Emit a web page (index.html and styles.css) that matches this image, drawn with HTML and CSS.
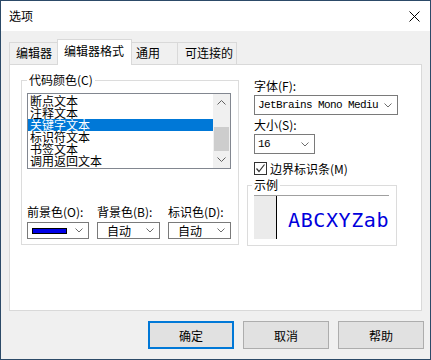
FILE: index.html
```
<!DOCTYPE html>
<html lang="zh">
<head>
    <meta charset="utf-8">
    <title>选项</title>
    <link rel="stylesheet" href="styles.css">
</head>
<body>

<div class="window">
    <div class="titlebar">
        <span class="title">选项</span>
        <svg class="close" width="11" height="11" viewBox="0 0 11 11">
            <path d="M0.5 0.5L10.5 10.5M10.5 0.5L0.5 10.5" stroke="#000" stroke-width="1" fill="none"/>
        </svg>
    </div>

    <div class="content">
        <div class="tabs">
            <div class="tab tab-editor">编辑器</div>
            <div class="tab tab-format active">编辑器格式</div>
            <div class="tab tab-general">通用</div>
            <div class="tab tab-connect">可连接的</div>
        </div>

        <div class="panel">
            <div class="group colors">
                <div class="group-title">代码颜色(C)</div>
                <div class="listbox">
                    <ul class="items">
                        <li>断点文本</li>
                        <li>注释文本</li>
                        <li class="selected">关键字文本</li>
                        <li>标识符文本</li>
                        <li>书签文本</li>
                        <li>调用返回文本</li>
                    </ul>
                    <div class="scrollbar">
                        <div class="sb-btn">
                            <svg width="9" height="5" viewBox="0 0 9 5"><path d="M0.5 4.5L4.5 0.5L8.5 4.5" stroke="#606060" fill="none"/></svg>
                        </div>
                        <div class="sb-track"><div class="sb-thumb"></div></div>
                        <div class="sb-btn">
                            <svg width="9" height="5" viewBox="0 0 9 5"><path d="M0.5 0.5L4.5 4.5L8.5 0.5" stroke="#606060" fill="none"/></svg>
                        </div>
                    </div>
                </div>

                <div class="pickers">
                    <div class="picker">
                        <div class="picker-label">前景色(O):</div>
                        <div class="combo color-combo">
                            <span class="swatch"></span>
                            <svg class="chev" width="8" height="5" viewBox="0 0 8 5"><path d="M0.5 0.5L4 4L7.5 0.5" stroke="#6d6d6d" fill="none"/></svg>
                        </div>
                    </div>
                    <div class="picker">
                        <div class="picker-label">背景色(B):</div>
                        <div class="combo color-combo">
                            <span>自动</span>
                            <svg class="chev" width="8" height="5" viewBox="0 0 8 5"><path d="M0.5 0.5L4 4L7.5 0.5" stroke="#6d6d6d" fill="none"/></svg>
                        </div>
                    </div>
                    <div class="picker">
                        <div class="picker-label">标识色(D):</div>
                        <div class="combo color-combo">
                            <span>自动</span>
                            <svg class="chev" width="8" height="5" viewBox="0 0 8 5"><path d="M0.5 0.5L4 4L7.5 0.5" stroke="#6d6d6d" fill="none"/></svg>
                        </div>
                    </div>
                </div>
            </div>

            <div class="side">
                <div class="label">字体(F):</div>
                <div class="combo font-combo">
                    <span class="mono">JetBrains Mono Mediu</span>
                    <svg class="chev" width="8" height="5" viewBox="0 0 8 5"><path d="M0.5 0.5L4 4L7.5 0.5" stroke="#6d6d6d" fill="none"/></svg>
                </div>
                <div class="label size-label">大小(S):</div>
                <div class="combo size-combo">
                    <span class="mono">16</span>
                    <svg class="chev" width="8" height="5" viewBox="0 0 8 5"><path d="M0.5 0.5L4 4L7.5 0.5" stroke="#6d6d6d" fill="none"/></svg>
                </div>
                <div class="check">
                    <span class="box">
                        <svg width="11" height="11" viewBox="0 0 11 11"><path d="M1.5 5.5L4 8.5L9.5 1.5" stroke="#333" stroke-width="1.2" fill="none"/></svg>
                    </span>
                    边界标识条(M)
                </div>
                <div class="group sample">
                    <div class="group-title">示例</div>
                    <div class="preview">
                        <div class="gutter"></div>
                        <div class="sample-text">ABCXYZab</div>
                    </div>
                </div>
            </div>
        </div>

        <div class="buttons">
            <button class="btn default">确定</button>
            <button class="btn">取消</button>
            <button class="btn">帮助</button>
        </div>
    </div>
</div>

</body>
</html>
```

FILE: styles.css
```
* {
    box-sizing: border-box;
}
body {
    margin: 0;
    font-family: "Noto Sans CJK SC", sans-serif;
    font-size: 12px;
    color: #000;
}
.window {
    width: 431px;
    height: 360px;
    border: 1px solid #2c4a68;
    background: #f0f0f0;
    display: flex;
    flex-direction: column;
}
.titlebar {
    height: 30px;
    flex: none;
    background: #fff;
    display: flex;
    align-items: center;
    justify-content: space-between;
    padding: 0 10px 0 8px;
}
.title {
    line-height: 14px;
}
.content {
    flex: 1;
    display: flex;
    flex-direction: column;
    padding: 8px 8px 10px;
}

/* tabs */
.tabs {
    display: flex;
    align-items: flex-end;
    height: 25px;
    flex: none;
}
.tab {
    height: 22px;
    margin-left: -1px;
    border: 1px solid #d9d9d9;
    border-bottom: none;
    background: #f0f0f0;
    line-height: 20px;
    white-space: nowrap;
}
.tab.active {
    height: 26px;
    margin-bottom: -1px;
    background: #fff;
    line-height: 22px;
    position: relative;
    z-index: 1;
}
.tab-editor {
    margin-left: 0;
    width: 49px;
    padding-left: 6px;
}
.tab-format {
    width: 75px;
    padding-left: 6px;
}
.tab-general {
    width: 47px;
    padding-left: 4px;
}
.tab-connect {
    width: 60px;
    padding-left: 7px;
}
.panel {
    height: 247px;
    flex: none;
    border: 1px solid #d9d9d9;
    background: #fff;
    display: flex;
    align-items: flex-start;
    padding: 15px 0 0 11px;
}

/* group boxes */
.group {
    border: 1px solid #dcdcdc;
}
.group-title {
    width: fit-content;
    margin-top: -8px;
    padding: 0 2px;
    line-height: 14px;
    background: #fff;
}
.colors {
    width: 218px;
    height: 165px;
    display: flex;
    flex-direction: column;
    padding-bottom: 5px;
}
.colors .group-title {
    margin-left: 5px;
}
.listbox {
    width: 204px;
    height: 76px;
    margin: 6px 0 0 5px;
    border: 1px solid #828790;
    display: flex;
}
.items {
    flex: 1;
    list-style: none;
    margin: 0;
    padding: 1px 0 0;
    overflow: hidden;
}
.items li {
    height: 12px;
    line-height: 12px;
    padding-left: 2px;
    white-space: nowrap;
}
.items li.selected {
    background: #0078d7;
    color: #fff;
}
.scrollbar {
    width: 17px;
    flex: none;
    background: #f0f0f0;
    display: flex;
    flex-direction: column;
}
.sb-btn {
    height: 17px;
    display: flex;
    align-items: center;
    justify-content: center;
}
.sb-track {
    flex: 1;
    padding: 16px 1px 0;
}
.sb-thumb {
    height: 24px;
    background: #cdcdcd;
}
.pickers {
    margin-top: auto;
    padding-left: 5px;
    display: grid;
    grid-template-columns: 62px 63px 63px;
    column-gap: 8px;
}
.picker-label {
    line-height: 14px;
    white-space: nowrap;
}

/* combos */
.combo {
    border: 1px solid #7a7a7a;
    background: #fff;
    display: flex;
    align-items: center;
    justify-content: space-between;
}
.color-combo {
    height: 17px;
    margin-top: 3px;
    padding: 0 5px 0 9px;
    line-height: 14px;
}
.color-combo .swatch {
    width: 35px;
    height: 6px;
    margin-left: -5px;
    background: #0000e6;
    border: 1px solid #000;
}
.mono {
    font-family: "Liberation Mono", monospace;
    font-size: 11px;
    letter-spacing: -0.6px;
}
.side {
    width: 144px;
    margin-left: 15px;
    display: flex;
    flex-direction: column;
}
.label {
    line-height: 12px;
}
.size-label {
    margin-top: 4px;
}
.font-combo,
.size-combo {
    height: 20px;
    margin-top: 3px;
    padding: 0 5px 0 3px;
}
.size-combo {
    width: 61px;
}
.check {
    height: 13px;
    margin-top: 8px;
    display: flex;
    align-items: center;
    gap: 3px;
    line-height: 13px;
    white-space: nowrap;
}
.box {
    width: 13px;
    height: 13px;
    border: 1px solid #333;
    background: #fff;
    display: flex;
}
.sample {
    width: 150px;
    height: 61px;
    margin: 10px 0 0 -7px;
}
.sample .group-title {
    margin-left: 4px;
}
.preview {
    width: 135px;
    height: 44px;
    margin: 3px 0 0 6px;
    border-top: 1px solid #a0a0a0;
    display: flex;
    overflow: hidden;
}
.gutter {
    width: 23px;
    flex: none;
    background: #ebebeb;
    border-right: 1px solid #000;
}
.sample-text {
    padding: 13px 0 0 11px;
    font-family: "DejaVu Sans Mono", monospace;
    font-size: 20px;
    line-height: 23px;
    letter-spacing: 0.6px;
    color: #0000dc;
    white-space: nowrap;
}

/* dialog buttons */
.buttons {
    display: flex;
    justify-content: flex-end;
    gap: 9px;
    margin: 10px -2px 0 0;
}
.btn {
    width: 86px;
    height: 28px;
    border: 1px solid #adadad;
    background: #e1e1e1;
    font-family: inherit;
    font-size: 12px;
    color: #000;
    padding: 0;
}
.btn.default {
    border: 2px solid #0078d7;
}
```
